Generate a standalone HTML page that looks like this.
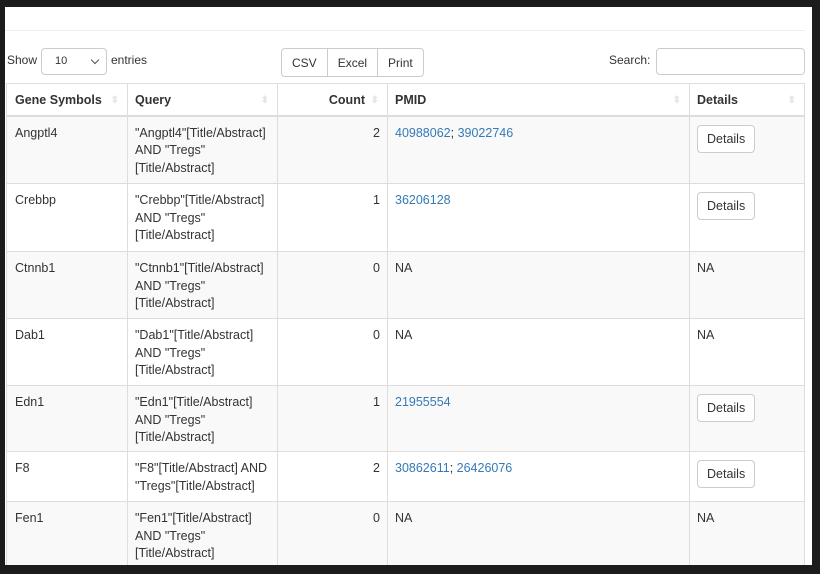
<!DOCTYPE html>
<html><head><meta charset="utf-8"><style>
*{box-sizing:border-box;margin:0;padding:0}
body{width:820px;height:574px;background:#1c1c1c;overflow:hidden;font-family:"Liberation Sans",Arial,sans-serif;font-size:12.5px;color:#333}
#w{position:absolute;left:5px;top:7px;width:807px;height:558px;background:#fff;overflow:hidden}
.hr{position:absolute;left:0;top:23px;width:800px;border-top:1px solid #eee}
.show{position:absolute;left:2px;top:46px;font-size:12px}
.sel{position:absolute;left:36px;top:41px;width:66px;height:27px;border:1px solid #ccc;border-radius:4px;font-size:11px;padding:6px 0 0 13px}
.sel:after{content:"";position:absolute;right:8px;top:8px;width:5px;height:5px;border-right:1px solid #555;border-bottom:1px solid #555;transform:rotate(45deg)}
.ent{position:absolute;left:106px;top:46px;font-size:12px}
.btns{position:absolute;left:276px;top:41px;height:29px;border:1px solid #ccc;border-radius:4px;display:flex}
.btns div{padding:7px 10px 0;height:27px;border-left:1px solid #ccc;font-size:12px}
.btns div:first-child{border-left:none}
.srch{position:absolute;left:604px;top:46px;font-size:12px}
.si{position:absolute;left:651px;top:41px;width:149px;height:27px;border:1px solid #ccc;border-radius:4px}
table{position:absolute;left:1px;top:76px;border-collapse:collapse;width:798px;table-layout:fixed}
th,td{border:1px solid #ddd;padding:8px 7px 3px;vertical-align:top;line-height:17.5px;text-align:left}
td:first-child,th:first-child{padding-left:8px}
th{font-weight:bold;height:32px;border-bottom:2px solid #ddd;position:relative;padding-top:8px;padding-bottom:5px}
th:after{content:"⬍";position:absolute;right:8px;top:8px;color:#e6e6e6;font-size:10px}
tbody tr:nth-child(odd){background:#f9f9f9}
.r{text-align:right}
a{color:#337ab7;text-decoration:none}
.b{display:inline-block;border:1px solid #ccc;border-radius:4px;padding:6px 9px;background:#fff;line-height:14px;font-size:12.5px}
</style></head><body><div id="w">
<div class="hr"></div>
<div class="show">Show</div><div class="sel">10</div><div class="ent">entries</div>
<div class="btns"><div>CSV</div><div>Excel</div><div>Print</div></div>
<div class="srch">Search:</div><div class="si"></div>
<table>
<colgroup><col style="width:121px"><col style="width:150px"><col style="width:110px"><col style="width:302px"><col style="width:115px"></colgroup>
<thead><tr><th>Gene Symbols</th><th>Query</th><th class="r" style="padding-right:22px">Count</th><th>PMID</th><th>Details</th></tr></thead>
<tbody>
<tr style="height:68px"><td>Angptl4</td><td>"Angptl4"[Title/Abstract]<br>AND "Tregs"<br>[Title/Abstract]</td><td class="r">2</td><td><a>40988062</a>; <a>39022746</a></td><td><span class="b">Details</span></td></tr>
<tr style="height:68px"><td>Crebbp</td><td>"Crebbp"[Title/Abstract]<br>AND "Tregs"<br>[Title/Abstract]</td><td class="r">1</td><td><a>36206128</a></td><td><span class="b">Details</span></td></tr>
<tr style="height:67px"><td>Ctnnb1</td><td>"Ctnnb1"[Title/Abstract]<br>AND "Tregs"<br>[Title/Abstract]</td><td class="r">0</td><td>NA</td><td>NA</td></tr>
<tr style="height:67px"><td>Dab1</td><td>"Dab1"[Title/Abstract]<br>AND "Tregs"<br>[Title/Abstract]</td><td class="r">0</td><td>NA</td><td>NA</td></tr>
<tr style="height:66px"><td>Edn1</td><td>"Edn1"[Title/Abstract]<br>AND "Tregs"<br>[Title/Abstract]</td><td class="r">1</td><td><a>21955554</a></td><td><span class="b">Details</span></td></tr>
<tr style="height:50px"><td>F8</td><td style="white-space:nowrap">"F8"[Title/Abstract] AND<br>"Tregs"[Title/Abstract]</td><td class="r">2</td><td><a>30862611</a>; <a>26426076</a></td><td><span class="b">Details</span></td></tr>
<tr style="height:66px"><td>Fen1</td><td>"Fen1"[Title/Abstract]<br>AND "Tregs"<br>[Title/Abstract]</td><td class="r">0</td><td>NA</td><td>NA</td></tr>
</tbody></table>
</div></body></html>
